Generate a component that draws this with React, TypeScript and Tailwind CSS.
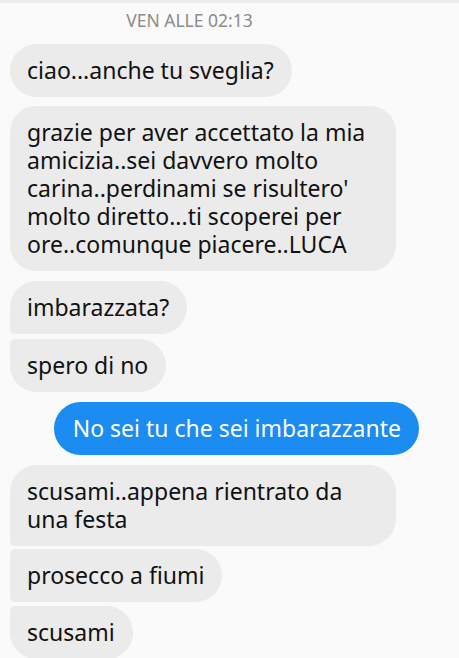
const font = { fontFamily: "'Noto Sans', 'Open Sans', sans-serif" };

type Bubble = {
  lines: string[];
  corners: string;
  wide?: boolean;
  gap: string;
};

const messages: Bubble[] = [
  { lines: ["ciao...anche tu sveglia?"], corners: "rounded-[27px]", gap: "mt-0" },
  {
    lines: [
      "grazie per aver accettato la mia",
      "amicizia..sei davvero molto",
      "carina..perdinami se risultero'",
      "molto diretto...ti scoperei per",
      "ore..comunque piacere..LUCA",
    ],
    corners: "rounded-[26px]",
    wide: true,
    gap: "mt-[9px]",
  },
  { lines: ["imbarazzata?"], corners: "rounded-[27px] rounded-bl-[5px]", gap: "mt-[10px]" },
  { lines: ["spero di no"], corners: "rounded-[27px] rounded-tl-[5px]", gap: "mt-[5px]" },
];

const after: Bubble[] = [
  {
    lines: ["scusami..appena rientrato da", "una festa"],
    corners: "rounded-[27px] rounded-bl-[5px]",
    wide: true,
    gap: "mt-[10px]",
  },
  { lines: ["prosecco a fiumi"], corners: "rounded-[27px] rounded-l-[5px]", gap: "mt-[3px]" },
  { lines: ["scusami"], corners: "rounded-[27px] rounded-tl-[5px]", gap: "mt-[4px]" },
];

const Incoming = ({ b }: { b: Bubble }) => (
  <div
    className={`${b.gap} ${b.corners} ${
      b.wide ? "w-[386px]" : "self-start"
    } bg-[#ebebeb] pl-[17px] pr-[18px] pt-[12px] pb-[13px] text-[23px] leading-[28px] text-[#111]`}
  >
    {b.lines.map((l, i) => (
      <div key={i} className="whitespace-nowrap">
        {l}
      </div>
    ))}
  </div>
);

export default function App() {
  return (
    <div className="h-[658px] w-[459px] overflow-hidden bg-[#fafafa]" style={font}>
      <div className="h-[3px] bg-[#ececec]" />
      <div className="flex h-[41px] justify-center pr-[80px] pt-[6px] text-[17.5px] leading-[22px] text-[#8c8c8c]">
        VEN ALLE 02:13
      </div>
      <div className="flex flex-col pl-[10px]">
        {messages.map((b, i) => (
          <Incoming key={i} b={b} />
        ))}
        <div className="mt-[10px] self-end mr-[40px] rounded-[27px] bg-[#1b8cf2] pl-[19px] pr-[18px] pt-[12px] pb-[13px] text-[23px] leading-[28px] text-white">
          No sei tu che sei imbarazzante
        </div>
        {after.map((b, i) => (
          <Incoming key={i} b={b} />
        ))}
      </div>
    </div>
  );
}
